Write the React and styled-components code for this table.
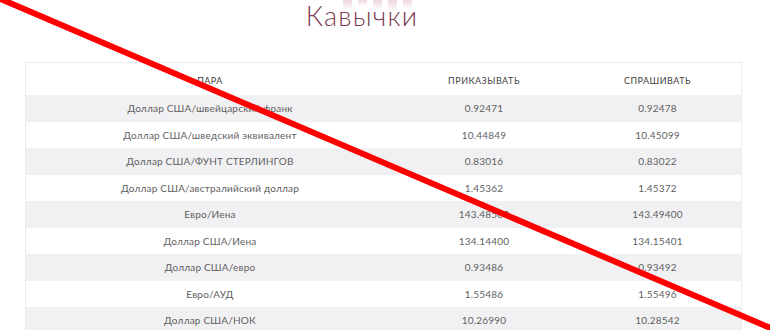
import styled, { createGlobalStyle } from "styled-components";

const GlobalStyle = createGlobalStyle`
  html, body {
    margin: 0;
    padding: 0;
    background: #ffffff;
  }
  body {
    width: 770px;
    height: 330px;
    overflow: hidden;
    font-family: "Lato", "Open Sans", sans-serif;
  }
`;

const Page = styled.div`
  position: relative;
  width: 770px;
  height: 330px;
  overflow: hidden;
`;

const Heading = styled.div`
  position: relative;
  height: 62px;
  display: flex;
  justify-content: center;
  padding-right: 46px;
`;

const Bars = styled.div`
  position: absolute;
  top: 0;
  left: 343px;
  display: flex;
  align-items: flex-start;
  gap: 6px;
`;

const Bar = styled.div`
  width: 9px;
  height: ${(p) => p.h}px;
  background: linear-gradient(180deg, #f0d6df, rgba(255, 255, 255, 0));
`;

const Title = styled.h1`
  position: relative;
  margin: 0;
  font-family: "Lato", sans-serif;
  font-weight: 300;
  font-size: 27px;
  letter-spacing: 1.2px;
  line-height: 32px;
  color: #7d3b52;
`;

const Table = styled.div`
  margin: 0 28px 0 25px;
  border: 1px solid #ebebeb;
  border-bottom: none;
`;

const Row = styled.div`
  display: grid;
  grid-template-columns: 368px 180px 1fr;
  height: ${(p) => (p.head ? 32 : 26.5)}px;
  align-items: center;
  background: ${(p) => (p.shade ? "#f1f1f3" : "#ffffff")};
`;

const HeadCell = styled.div`
  text-align: center;
  font-size: 9px;
  font-weight: 400;
  letter-spacing: 0.5px;
  color: #3f3f3f;
  padding-top: 3px;
`;

const Cell = styled.div`
  text-align: center;
  font-size: 10px;
  color: #5f5f5f;
  letter-spacing: 0.2px;
`;

const Strike = styled.svg`
  position: absolute;
  inset: 0;
  pointer-events: none;
`;

const rows = [
  ["Доллар США/швейцарский франк", "0.92471", "0.92478"],
  ["Доллар США/шведский эквивалент", "10.44849", "10.45099"],
  ["Доллар США/ФУНТ СТЕРЛИНГОВ", "0.83016", "0.83022"],
  ["Доллар США/австралийский доллар", "1.45362", "1.45372"],
  ["Евро/Иена", "143.48500", "143.49400"],
  ["Доллар США/Иена", "134.14400", "134.15401"],
  ["Доллар США/евро", "0.93486", "0.93492"],
  ["Евро/АУД", "1.55486", "1.55496"],
  ["Доллар США/НОК", "10.26990", "10.28542"],
];

export default function App() {
  return (
    <Page>
      <GlobalStyle />
      <Heading>
        <Bars>
          <Bar h={10} />
          <Bar h={6} />
          <Bar h={10} />
          <Bar h={12} />
          <Bar h={9} />
        </Bars>
        <Title>Кавычки</Title>
      </Heading>
      <Table>
        <Row head>
          <HeadCell>ПАРА</HeadCell>
          <HeadCell>ПРИКАЗЫВАТЬ</HeadCell>
          <HeadCell>СПРАШИВАТЬ</HeadCell>
        </Row>
        {rows.map((r, i) => (
          <Row key={r[0]} shade={i % 2 === 0}>
            <Cell>{r[0]}</Cell>
            <Cell>{r[1]}</Cell>
            <Cell>{r[2]}</Cell>
          </Row>
        ))}
      </Table>
      <Strike width="770" height="330" viewBox="0 0 770 330">
        <line x1="-4" y1="-3" x2="775" y2="330" stroke="#ff0000" strokeWidth="6" />
      </Strike>
    </Page>
  );
}
